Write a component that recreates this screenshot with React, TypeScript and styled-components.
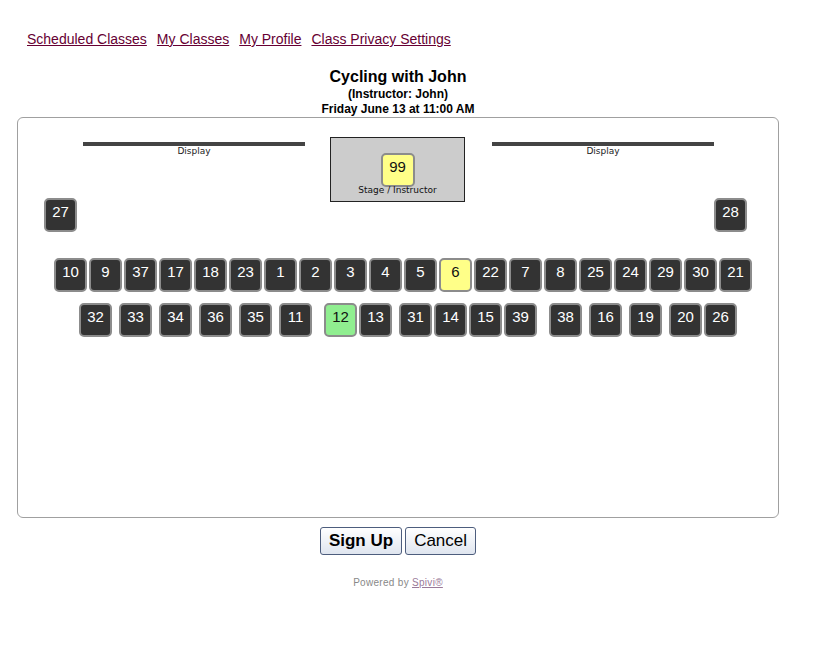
import React from "react";
import styled, { createGlobalStyle } from "styled-components";

type SeatState = "taken" | "mine" | "free";

interface Seat {
  num: number;
  x: number;
  y: number;
  state?: SeatState;
}

// seat coordinates on the room canvas (relative to the room box)
const row1 = [10, 9, 37, 17, 18, 23, 1, 2, 3, 4, 5, 6, 22, 7, 8, 25, 24, 29, 30, 21];
const row2 = [
  [32, 61], [33, 101], [34, 141], [36, 181], [35, 221], [11, 261], [12, 306], [13, 341],
  [31, 381], [14, 416], [15, 451], [39, 486], [38, 531], [16, 571], [19, 611], [20, 651], [26, 686],
];

const seats: Seat[] = [
  { num: 27, x: 26, y: 80 },
  { num: 28, x: 696, y: 80 },
  ...row1.map((num, i) => ({
    num,
    x: 36 + i * 35,
    y: 140,
    state: (num === 6 ? "free" : "taken") as SeatState,
  })),
  ...row2.map(([num, x]) => ({
    num,
    x,
    y: 185,
    state: (num === 12 ? "mine" : "taken") as SeatState,
  })),
];

const seatColors: Record<SeatState, { bg: string; fg: string }> = {
  taken: { bg: "#333333", fg: "#ffffff" },
  mine: { bg: "#90ee90", fg: "#111111" },
  free: { bg: "#ffff88", fg: "#111111" },
};

const App = () => {
  return (
    <>
      <GlobalStyle />
      <Page>
        <Nav>
          <NavLink href="#">Scheduled Classes</NavLink>
          <NavLink href="#">My Classes</NavLink>
          <NavLink href="#">My Profile</NavLink>
          <NavLink href="#">Class Privacy Settings</NavLink>
        </Nav>
        <Header>
          <ClassTitle>Cycling with John</ClassTitle>
          <SubTitle>(Instructor: John)</SubTitle>
          <SubTitle>Friday June 13 at 11:00 AM</SubTitle>
        </Header>
        <Room>
          <Display $left={65} $width={222}>
            <DisplayBar />
            <DisplayLabel>Display</DisplayLabel>
          </Display>
          <Display $left={474} $width={222}>
            <DisplayBar />
            <DisplayLabel>Display</DisplayLabel>
          </Display>
          <Stage>
            <StageSeat>99</StageSeat>
            <StageLabel>Stage / Instructor</StageLabel>
          </Stage>
          {seats.map((s) => (
            <SeatBox
              key={s.num}
              $state={s.state ?? "taken"}
              style={{ left: s.x, top: s.y }}
            >
              {s.num}
            </SeatBox>
          ))}
        </Room>
        <Actions>
          <Button $primary>Sign Up</Button>
          <Button>Cancel</Button>
        </Actions>
        <Footer>
          Powered by <FooterLink href="#">Spivi®</FooterLink>
        </Footer>
      </Page>
    </>
  );
};

export default App;

const GlobalStyle = createGlobalStyle`
  body {
    margin: 0;
    background: #ffffff;
    font-family: "Liberation Sans", Arial, sans-serif;
  }
`;

const Page = styled.div`
  width: 762px;
  padding: 31px 0 0 17px;
`;

const Nav = styled.nav`
  display: flex;
  gap: 10px;
  padding-left: 10px;
  font-size: 14px;
  line-height: 16px;
`;

const NavLink = styled.a`
  color: #660033;
  text-decoration: underline;
`;

const Header = styled.div`
  display: flex;
  flex-direction: column;
  align-items: center;
  margin-top: 20px;
  color: #000;
  font-weight: bold;
`;

const ClassTitle = styled.div`
  font-size: 16px;
  line-height: 20px;
`;

const SubTitle = styled.div`
  font-size: 12px;
  line-height: 15px;
`;

const Room = styled.div`
  position: relative;
  height: 399px;
  border: 1px solid #a0a0a0;
  border-radius: 6px;
`;

const Display = styled.div<{ $left: number; $width: number }>`
  position: absolute;
  top: 24px;
  left: ${(p) => p.$left}px;
  width: ${(p) => p.$width}px;
  display: flex;
  flex-direction: column;
  align-items: center;
`;

const DisplayBar = styled.div`
  width: 100%;
  height: 4px;
  background: #444444;
`;

const DisplayLabel = styled.span`
  font-family: "DejaVu Sans", Verdana, sans-serif;
  font-size: 9px;
  line-height: 10px;
  color: #222;
`;

const Stage = styled.div`
  position: absolute;
  left: 312px;
  top: 19px;
  width: 135px;
  height: 65px;
  border: 1px solid #222;
  background: #cccccc;
  display: flex;
  flex-direction: column;
  align-items: center;
  padding-top: 15px;
  box-sizing: border-box;
`;

const SeatBase = styled.div`
  box-sizing: border-box;
  width: 34px;
  height: 34px;
  border: 2px solid #8c8c8c;
  border-radius: 5px;
  font-family: "Liberation Sans", Tahoma, sans-serif;
  font-size: 15px;
  line-height: 17px;
  text-align: center;
  padding-top: 3px;
`;

const StageSeat = styled(SeatBase)`
  background: #ffff88;
  color: #111;
`;

const StageLabel = styled.span`
  margin-top: -2px;
  font-family: "DejaVu Sans", Verdana, sans-serif;
  font-size: 9px;
  line-height: 10px;
  color: #111;
`;

const SeatBox = styled(SeatBase)<{ $state: SeatState }>`
  position: absolute;
  width: 33px;
  background: ${(p) => seatColors[p.$state].bg};
  color: ${(p) => seatColors[p.$state].fg};
`;

const Actions = styled.div`
  display: flex;
  justify-content: center;
  gap: 3px;
  margin-top: 9px;
`;

const Button = styled.button<{ $primary?: boolean }>`
  height: 28px;
  padding: 0 8px;
  border: 1px solid #4d5d7d;
  border-radius: 3px;
  background: linear-gradient(#ffffff, #dfe5ef);
  font-family: "Liberation Sans", Arial, sans-serif;
  font-size: 17px;
  font-weight: ${(p) => (p.$primary ? "bold" : "normal")};
  color: #000;
`;

const Footer = styled.div`
  margin-top: 22px;
  text-align: center;
  font-size: 10px;
  letter-spacing: 0.3px;
  color: #888888;
`;

const FooterLink = styled.a`
  color: #9a7a9a;
  text-decoration: underline;
`;
